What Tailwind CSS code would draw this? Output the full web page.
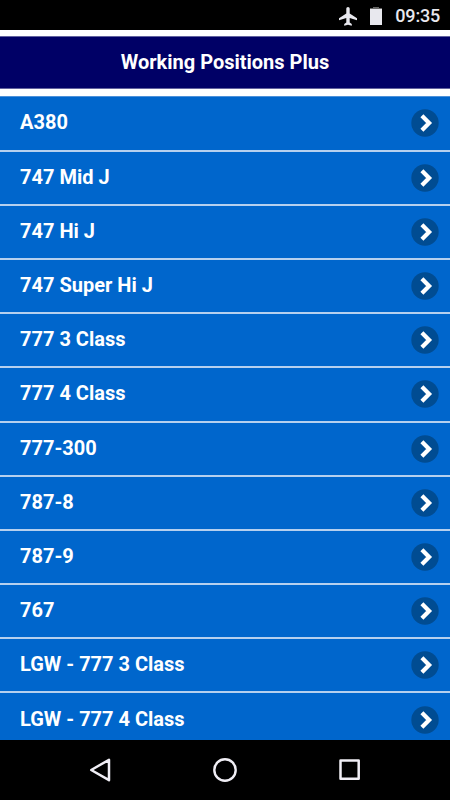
<!DOCTYPE html>
<html lang="en">
<head>
  <meta charset="UTF-8" />
  <title>Working Positions Plus</title>
  <meta name="viewport" content="width=device-width, initial-scale=1.0" />
  <script src="https://cdn.jsdelivr.net/npm/@tailwindcss/browser@4"></script>
  <style>
    body {
      font-family: Roboto, 'Liberation Sans', sans-serif;
    }
  </style>
</head>
<body class="bg-black w-[450px] h-[800px] overflow-hidden flex flex-col text-white">

  <!-- Status bar -->
  <div class="h-[30px] shrink-0 flex items-center justify-end pr-[10px] pt-[2px] text-[#e8e8ee]">
    <svg class="w-[18px] h-[19px] mr-[12px]" viewBox="0 0 18 19" fill="currentColor"><path d="M7.300 6.500V1.500a1.700 1.500 0 0 1 3.400 0v5L18 11.200v2.100l-7.300-2.300v4.500l2.100 1.600v1.600L9 17.800l-3.800.9v-1.600l2.100-1.600v-4.500L0 13.300v-2.100z"/></svg>
    <svg class="w-[14px] h-[18px] mr-[12px]" viewBox="0 0 14 18"><path fill="#666" d="M4 0h6v1h3v2H1v-2h3z"/><path fill="currentColor" d="M1 2h12v16H1z"/></svg>
    <span class="text-[18px] leading-none font-medium tracking-[-0.2px]">09:35</span>
  </div>

  <header class="h-[66px] shrink-0 bg-white pt-[6px]">
    <div class="h-[53px] bg-[#000066] border-y border-[#62629f] flex items-center justify-center pb-px">
      <h1 class="text-[20px] leading-none font-bold">Working Positions Plus</h1>
    </div>
  </header>

  <ul id="list" class="flex-1 min-h-0 overflow-hidden bg-[#0066cc] border-t border-[#4c91da] pt-[0.4px]"></ul>

  <!-- Navigation bar -->
  <nav class="h-[60px] shrink-0 flex justify-between pl-[88px] pr-[88px] items-center">
    <svg class="w-6 h-[26px]" viewBox="0 0 24 26" fill="none" stroke="#f0eef5" stroke-width="2.500" stroke-linejoin="round"><path d="M3.200 13 21 2.800v20.400z"/></svg>
    <svg class="w-[26px] h-[26px]" viewBox="0 0 26 26" fill="none" stroke="#f0eef5" stroke-width="2.400"><circle cx="13" cy="13" r="10.700"/></svg>
    <svg class="w-6 h-6" viewBox="0 0 24 24" fill="none" stroke="#f0eef5" stroke-width="2.500" stroke-linejoin="round"><path d="M2.500 2.500h18.200v18.200H2.500z"/></svg>
  </nav>

  <template id="row">
    <li class="h-[54.2px] border-b-2 border-[#b5d0ef] flex items-center justify-between pl-[20px] pr-[11px]">
      <span class="text-[20px] leading-none font-bold pb-[2px]"></span>
      <svg class="w-7 h-7" viewBox="0 0 28 28"><circle cx="14" cy="14" r="13.700" fill="#004c92"/><path d="m10.900 6.800 7.200 7.200-7.200 7.200" fill="none" stroke="#fff" stroke-width="4.200"/></svg>
    </li>
  </template>

<script>
  const positions = [
    'A380', '747 Mid J', '747 Hi J', '747 Super Hi J', '777 3 Class', '777 4 Class',
    '777-300', '787-8', '787-9', '767', 'LGW - 777 3 Class', 'LGW - 777 4 Class'
  ];
  const list = document.getElementById('list');
  const row = document.getElementById('row');

  positions.forEach(name => {
    const item = row.content.cloneNode(true);
    item.querySelector('span').textContent = name;
    list.appendChild(item);
  });
</script>

</body>
</html>
